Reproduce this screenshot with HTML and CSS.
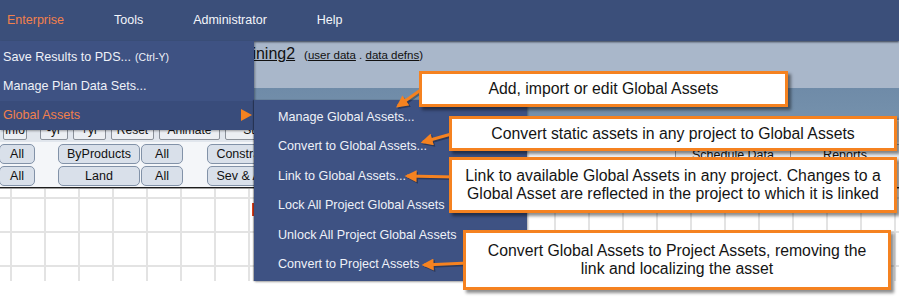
FILE: index.html
```html
<!DOCTYPE html>
<html lang="en">
<head>
  <meta charset="UTF-8" />
  <meta name="viewport" content="width=device-width,initial-scale=1.0" />
  <title>Global Assets menu</title>
  <link rel="stylesheet" href="styles.css">
</head>
<body>
  <div class="screen">
    <nav class="menubar">
      <span class="menubar-item is-open">Enterprise</span>
      <span class="menubar-item">Tools</span>
      <span class="menubar-item">Administrator</span>
      <span class="menubar-item">Help</span>
    </nav>

    <main class="workspace">
      <div class="title-strip">
        <a class="plan-name">Training2</a>
        <span class="plan-links">(<a>user data</a> . <a>data defns</a>)</span>
      </div>
      <div class="band"></div>
      <div class="toolbar">
        <span class="tool-btn tool-first">Info</span>
        <span class="tool-btn w28">-yr</span>
        <span class="tool-btn w33">+yr</span>
        <span class="tool-btn w43">Reset</span>
        <span class="tool-btn w60">Animate</span>
        <span class="tool-btn w60">Stop</span>
      </div>
      <div class="filters">
        <div class="filter-groups">
          <div class="filter-row">
            <span class="pill pill-all">All</span>
            <span class="pill pill-wide">ByProducts</span>
            <span class="pill pill-all">All</span>
            <span class="pill pill-wide">Constraints</span>
          </div>
          <div class="filter-row">
            <span class="pill pill-all">All</span>
            <span class="pill pill-wide">Land</span>
            <span class="pill pill-all">All</span>
            <span class="pill pill-wide">Sev &amp; Alloc</span>
          </div>
        </div>
        <div class="table-heads">
          <span class="table-head head-schedule">Schedule Data</span>
          <span class="table-head head-reports">Reports</span>
        </div>
      </div>
      <div class="grid">
        <span class="grid-marker"></span>
      </div>
    </main>

    <ul class="dropdown">
      <li class="menu-item">Save Results to PDS... <small>(Ctrl-Y)</small></li>
      <li class="menu-item">Manage Plan Data Sets...</li>
      <li class="menu-item is-open">Global Assets <span class="caret"></span></li>
    </ul>

    <ul class="submenu">
      <li class="menu-item">Manage Global Assets...</li>
      <li class="menu-item">Convert to Global Assets...</li>
      <li class="menu-item">Link to Global Assets...</li>
      <li class="menu-item">Lock All Project Global Assets</li>
      <li class="menu-item">Unlock All Project Global Assets</li>
      <li class="menu-item">Convert to Project Assets</li>
    </ul>

    <svg class="arrows" width="899" height="298" viewBox="0 0 899 298">
      <defs>
        <marker id="head" viewBox="0 0 10 10" refX="8" refY="5" markerWidth="4.2" markerHeight="4" orient="auto">
          <path d="M0,0 L10,5 L0,10 z" fill="#f58220" />
        </marker>
        <marker id="head-shadow" viewBox="0 0 10 10" refX="8" refY="5" markerWidth="4.2" markerHeight="4" orient="auto">
          <path d="M0,0 L10,5 L0,10 z" fill="#000" />
        </marker>
      </defs>
      <g class="arrow-shadow" transform="translate(1.5,1.5)">
        <line x1="432" y1="82" x2="398" y2="106" marker-end="url(#head-shadow)" />
        <line x1="455" y1="133" x2="423" y2="142" marker-end="url(#head-shadow)" />
        <line x1="455" y1="177" x2="407" y2="176" marker-end="url(#head-shadow)" />
        <line x1="468" y1="263" x2="424" y2="265" marker-end="url(#head-shadow)" />
      </g>
      <g class="arrow">
        <line x1="432" y1="82" x2="398" y2="106" marker-end="url(#head)" />
        <line x1="455" y1="133" x2="423" y2="142" marker-end="url(#head)" />
        <line x1="455" y1="177" x2="407" y2="176" marker-end="url(#head)" />
        <line x1="468" y1="263" x2="424" y2="265" marker-end="url(#head)" />
      </g>
    </svg>

    <div class="callout callout-manage">Add, import or edit Global Assets</div>
    <div class="callout callout-convert">Convert static assets in any project to Global Assets</div>
    <div class="callout callout-link">Link to available Global Assets in any project. Changes to a<br>Global Asset are reflected in the project to which it is linked</div>
    <div class="callout callout-project">Convert Global Assets to Project Assets, removing the<br>link and localizing the asset</div>
  </div>
</body>
</html>
```

FILE: styles.css
```css
:root {
  --menubar: #3b4f7a;
  --menu: #3e5283;
  --menu-hover: #394c7b;
  --menu-text: #eef1f8;
  --accent: #f2804c;
  --callout: #f58220;
  --strip: #a9b7ca;
  --band: #7591ac;
  --grid-line: #e3e3e3;
}

* {
  box-sizing: border-box;
}

body {
  margin: 0;
  font-family: "Liberation Sans", Arial, sans-serif;
  background: #ffffff;
  color: #111;
}

.screen {
  position: relative;
  width: 899px;
  height: 298px;
  overflow: hidden;
}

/* menubar */

.menubar {
  position: relative;
  z-index: 2;
  display: flex;
  align-items: center;
  gap: 50px;
  height: 41px;
  padding: 0 0 2px 7px;
  background: var(--menubar);
  box-shadow: 0 1px 2px rgba(20, 28, 45, 0.8);
}

.menubar-item {
  font-size: 12.5px;
  color: #f4f6fb;
}

.menubar-item.is-open {
  color: var(--accent);
}

/* page behind the menus */

.title-strip {
  display: flex;
  align-items: baseline;
  height: 47px;
  padding: 3px 0 0 229px;
  background: var(--strip);
  line-height: 20px;
}

.plan-name {
  font-size: 16px;
  color: #111;
  text-decoration: underline;
}

.plan-links {
  margin-left: 9px;
  font-size: 11.5px;
}

.plan-links a {
  text-decoration: underline;
}

.band {
  height: 32px;
  background: linear-gradient(#6f8ba8, var(--band));
}

.toolbar {
  display: flex;
  align-items: flex-start;
  gap: 5px;
  height: 22px;
  padding-left: 3px;
  background: #e1e6ed;
}

.tool-btn {
  display: flex;
  align-items: center;
  justify-content: center;
  height: 20px;
  font-size: 12px;
  background: #eceff3;
  border: 1px solid #8a9099;
  border-radius: 2px;
}

.tool-first {
  width: 24px;
  margin-right: 8px;
}

.w28 { width: 28px; }
.w33 { width: 33px; }
.w43 { width: 43px; }
.w60 { width: 61px; }

.filters {
  display: flex;
  height: 46px;
  padding: 2px 0;
  background: #f4f6f9;
  border-bottom: 1px solid #1c1c1c;
}

.filter-groups {
  display: flex;
  flex-direction: column;
  gap: 2px;
}

.filter-row {
  display: flex;
  height: 20px;
  margin-left: -1px;
}

.pill {
  display: flex;
  align-items: center;
  justify-content: center;
  height: 20px;
  font-size: 12.5px;
  background: #d9e0ea;
  border: 1px solid #8292a8;
  border-radius: 5px;
}

.pill-all {
  width: 36px;
  margin-right: 23px;
}

.pill-wide {
  width: 82px;
}

.filter-row .pill-wide + .pill-all {
  width: 42px;
  margin-left: 1px;
  margin-right: 24px;
}

.table-heads {
  display: flex;
  margin-left: auto;
  height: 20px;
  background: #e9edf2;
  border-top: 1px solid #9aa5b4;
}

.table-head {
  display: flex;
  align-items: center;
  justify-content: center;
  font-size: 12.5px;
  border-left: 1px solid #8d98a8;
}

.head-schedule {
  width: 115px;
}

.head-reports {
  width: 109px;
}

.grid {
  position: relative;
  height: 93px;
  border-top: 1px solid #9c9c9c;
  background-color: #fff;
  background-image:
    linear-gradient(to right, var(--grid-line) 2px, transparent 2px),
    linear-gradient(to bottom, var(--grid-line) 2px, transparent 2px);
  background-size: 34px 34px;
  background-position: 10px 8px;
}

.grid-marker {
  position: absolute;
  left: 252px;
  top: 14px;
  width: 3px;
  height: 13px;
  background: #e2401c;
}

/* menus */

.dropdown,
.submenu {
  position: absolute;
  z-index: 3;
  margin: 0;
  padding: 1px 0 0;
  list-style: none;
  background: var(--menu);
  box-shadow: 1px 1px 2px rgba(0, 0, 0, 0.35);
}

.dropdown {
  top: 41px;
  left: 0;
  width: 254px;
}

.submenu {
  top: 100px;
  left: 254px;
  width: 273px;
  padding: 2px 0;
  box-shadow: -1px 0 1px rgba(0, 0, 0, 0.3), 1px 1px 2px rgba(0, 0, 0, 0.35);
}

.menu-item {
  display: flex;
  align-items: center;
  height: 29.3px;
  padding-left: 3px;
  font-size: 12.6px;
  color: var(--menu-text);
  white-space: nowrap;
}

.submenu .menu-item {
  height: 29.5px;
  padding-left: 24px;
}

.menu-item small {
  margin-left: 4px;
  font-size: 10.5px;
}

.menu-item.is-open {
  color: var(--accent);
  background: var(--menu-hover);
}

.caret {
  margin-left: auto;
  margin-right: 2px;
  border-top: 6px solid transparent;
  border-bottom: 6px solid transparent;
  border-left: 11px solid var(--callout);
}

/* annotation overlay */

.arrows {
  position: absolute;
  top: 0;
  left: 0;
  z-index: 4;
  pointer-events: none;
}

.arrow line {
  stroke: var(--callout);
  stroke-width: 3;
}

.arrow-shadow {
  opacity: 0.3;
}

.arrow-shadow line {
  stroke: #000;
  stroke-width: 3;
}

.callout {
  position: absolute;
  z-index: 5;
  display: flex;
  align-items: center;
  justify-content: center;
  text-align: center;
  font-size: 15.8px;
  line-height: 18px;
  color: #141414;
  background: #fff;
  border: 3px solid var(--callout);
  box-shadow: 3px 3px 3px rgba(0, 0, 0, 0.45);
}

.callout-manage {
  top: 71px;
  left: 419px;
  width: 369px;
  height: 36px;
}

.callout-convert {
  top: 116px;
  left: 449px;
  width: 448px;
  height: 35px;
}

.callout-link {
  top: 157px;
  left: 449px;
  width: 448px;
  height: 56px;
}

.callout-project {
  top: 230px;
  left: 463px;
  width: 428px;
  height: 60px;
}
```
